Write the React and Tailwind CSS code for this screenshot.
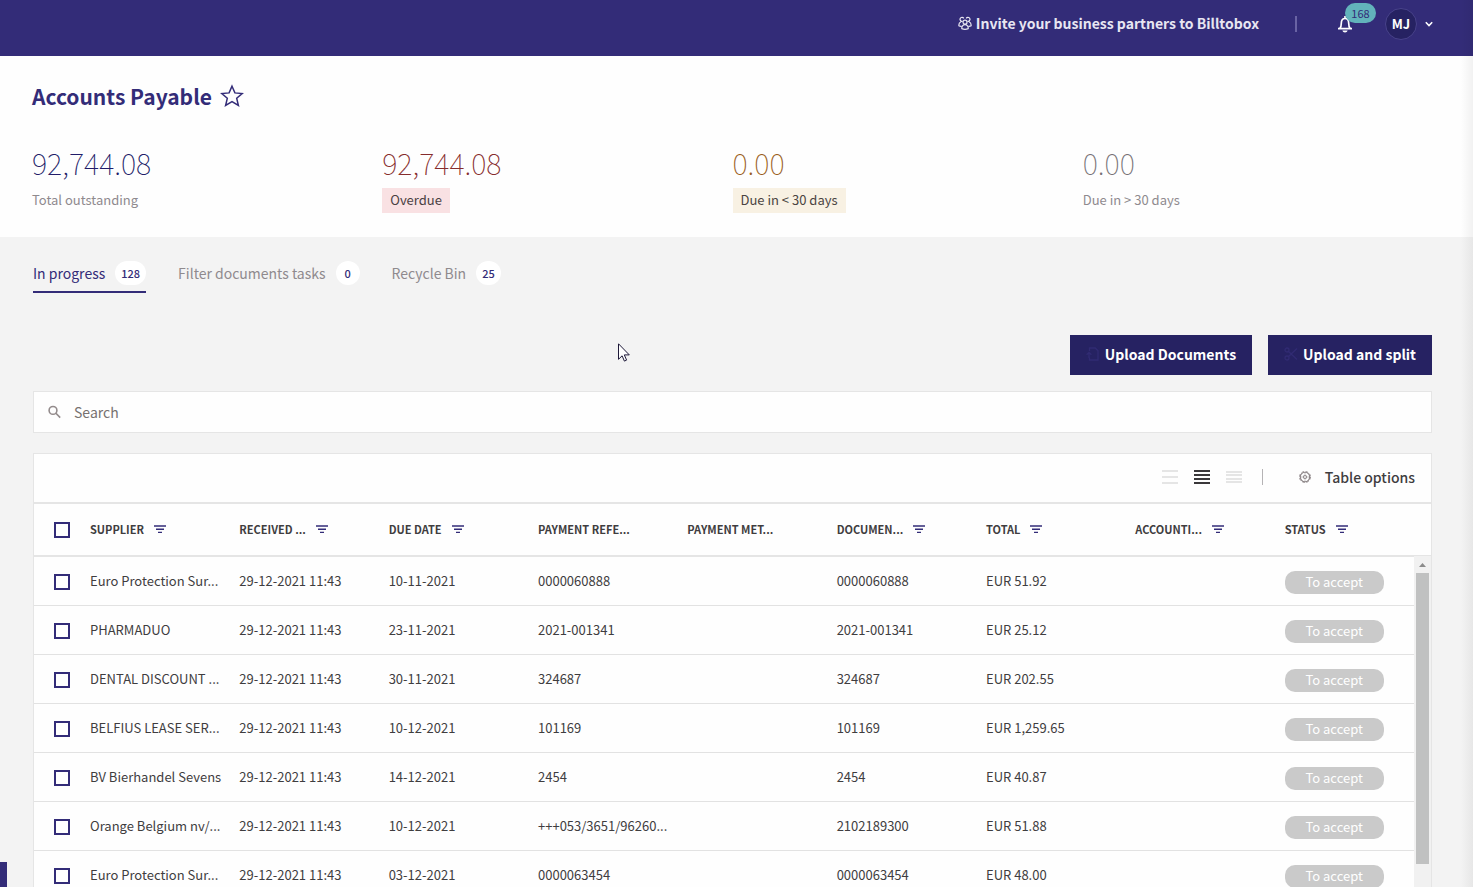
import { useState } from "react";
import clsx from "clsx";

const stats = [
  { value: "92,744.08", label: "Total outstanding", valueClass: "text-[#221c68]", labelClass: "text-[#8f8a8e]" },
  { value: "92,744.08", label: "Overdue", valueClass: "text-[#862c2c]", labelClass: "bg-[#f9e1e3] px-2 text-[#4a3f42]" },
  { value: "0.00", label: "Due in < 30 days", valueClass: "text-[#995d20]", labelClass: "bg-[#f8f1e3] px-2 text-[#4a4441]" },
  { value: "0.00", label: "Due in > 30 days", valueClass: "text-[#767175]", labelClass: "text-[#8f8a8e]" },
];

const tabs = [
  { id: "progress", label: "In progress", count: 128 },
  { id: "filter", label: "Filter documents tasks", count: 0 },
  { id: "bin", label: "Recycle Bin", count: 25 },
];

const columns = [
  { label: "SUPPLIER", filter: true },
  { label: "RECEIVED ...", filter: true },
  { label: "DUE DATE", filter: true },
  { label: "PAYMENT REFE...", filter: false },
  { label: "PAYMENT MET...", filter: false },
  { label: "DOCUMEN...", filter: true },
  { label: "TOTAL", filter: true },
  { label: "ACCOUNTI...", filter: true },
  { label: "STATUS", filter: true },
];

const rows = [
  { supplier: "Euro Protection Sur...", due: "10-11-2021", reference: "0000060888", document: "0000060888", total: "EUR 51.92" },
  { supplier: "PHARMADUO", due: "23-11-2021", reference: "2021-001341", document: "2021-001341", total: "EUR 25.12" },
  { supplier: "DENTAL DISCOUNT ...", due: "30-11-2021", reference: "324687", document: "324687", total: "EUR 202.55" },
  { supplier: "BELFIUS LEASE SER...", due: "10-12-2021", reference: "101169", document: "101169", total: "EUR 1,259.65" },
  { supplier: "BV Bierhandel Sevens", due: "14-12-2021", reference: "2454", document: "2454", total: "EUR 40.87" },
  { supplier: "Orange Belgium nv/...", due: "10-12-2021", reference: "+++053/3651/96260...", document: "2102189300", total: "EUR 51.88" },
  { supplier: "Euro Protection Sur...", due: "03-12-2021", reference: "0000063454", document: "0000063454", total: "EUR 48.00" },
];

export default function App() {
  const [tab, setTab] = useState("progress");

  return (
    <div className="relative flex h-screen flex-col overflow-hidden bg-[#f3f3f3] font-['Noto_Sans_CJK_SC',sans-serif] text-[#3f3d3f]">
      <TopBar />

      {/* Title and totals */}
      <section className="shrink-0 bg-[#fefefe] pt-6 pr-10 pb-6 pl-8">
        <div className="flex h-8 items-center gap-2">
          <h1 className="text-[21px] leading-8 font-bold text-[#332c78]">Accounts Payable</h1>
          <button type="button" aria-label="Add to favourites" className="text-[#332c78]">
            <StarIcon />
          </button>
        </div>
        <div className="mt-[30px] grid grid-cols-4">
          {stats.map((s) => (
            <div key={s.label}>
              <p className={clsx("text-[29px] leading-10 font-thin", s.valueClass)}>{s.value}</p>
              <p className={clsx("mt-[6px] inline-block pb-px text-[13px] leading-6", s.labelClass)}>{s.label}</p>
            </div>
          ))}
        </div>
      </section>

      <main className="flex min-h-0 flex-1 flex-col pt-6 pr-[41px] pl-[33px]">
        <nav className="flex shrink-0 gap-8">
          {tabs.map((t) => (
            <button
              key={t.id}
              type="button"
              onClick={() => setTab(t.id)}
              className={clsx(
                "flex h-8 items-start gap-[10px] border-b-2 text-sm leading-6",
                tab === t.id ? "border-[#332c78] text-[#332c78]" : "border-transparent text-[#8f8a8e]"
              )}
            >
              {t.label}
              <span className="min-w-6 rounded-full bg-white px-[6px] text-center text-[11px] leading-6 font-medium text-[#332c78]">
                {t.count}
              </span>
            </button>
          ))}
        </nav>

        <div className="mt-[42px] flex shrink-0 justify-end gap-4">
          <button type="button" className="flex h-10 items-center gap-[5px] bg-[#262262] px-4 pb-[2px] text-sm font-bold text-white">
            <UploadIcon />
            Upload Documents
          </button>
          <button type="button" className="flex h-10 items-center gap-[5px] bg-[#262262] px-4 pb-[2px] text-sm font-bold text-white">
            <ScissorsIcon />
            Upload and split
          </button>
        </div>

        <label className="mt-4 flex h-[42px] shrink-0 items-center gap-3 border border-[#e5e5e5] bg-[#fefefe] px-[14px]">
          <SearchIcon />
          <input
            type="text"
            aria-label="Search"
            placeholder="Search"
            className="min-w-0 flex-1 bg-transparent text-sm outline-none placeholder:text-[#76716f]"
          />
        </label>

        <section className="mt-5 flex min-h-0 flex-1 flex-col overflow-hidden border border-b-0 border-[#e5e5e5] bg-[#fefefe]">
          <Toolbar />
          <DocumentTable />
        </section>
      </main>

      <div className="absolute bottom-0 left-0 h-[25px] w-[7px] bg-[#332c78]" />
      <div className="absolute inset-y-0 right-0 w-3 bg-linear-to-r from-transparent to-black/5" />
      <PointerIcon />
    </div>
  );
}

function TopBar() {
  return (
    <header className="flex h-14 shrink-0 justify-end bg-[#332c78] pr-10">
      <div className="flex h-12 items-center">
        <a href="#invite" className="flex items-center gap-1 pb-[2px] text-sm font-bold text-[#e8e6f2]">
          <PeopleIcon />
          Invite your business partners to Billtobox
        </a>
        <span className="ml-9 h-4 w-[2px] bg-[#6963a4]" />
        <button type="button" aria-label="Notifications" className="relative ml-10 text-white">
          <BellIcon />
          <span className="absolute -top-3 left-2 w-[31px] rounded-full bg-[#62b3bb] text-center text-[11px] leading-5 text-[#332c78]">
            168
          </span>
        </button>
        <button type="button" aria-label="Account menu" className="ml-8 flex items-center gap-2 text-white">
          <span className="flex size-8 items-center justify-center rounded-full border border-[#48428b] bg-[#262262] text-[13px] font-bold">
            MJ
          </span>
          <svg viewBox="0 0 8 8" className="size-2" fill="none" stroke="currentColor" strokeWidth="1.6">
            <path d="M.8 2.3 4 5.5l3.200-3.200" />
          </svg>
        </button>
      </div>
    </header>
  );
}

function Toolbar() {
  return (
    <div className="flex h-[50px] shrink-0 items-center justify-end border-b-2 border-[#e5e5e5] pr-4 pb-[2px]">
      <div className="flex gap-4">
        <button type="button" aria-label="Comfortable rows" className="text-[#e5e5e5]">
          <svg viewBox="0 0 16 16" className="size-4" fill="currentColor">
            <path d="M0 1h16v2H0zM0 7h16v2H0zM0 13h16v2H0z" />
          </svg>
        </button>
        <button type="button" aria-label="Normal rows" className="text-[#3a383a]">
          <svg viewBox="0 0 16 16" className="size-4" fill="currentColor">
            <path d="M0 1h16v2H0zM0 5h16v2H0zM0 9h16v2H0zM0 13h16v2H0z" />
          </svg>
        </button>
        <button type="button" aria-label="Compact rows" className="text-[#e5e5e5]">
          <svg viewBox="0 0 16 16" className="size-4" fill="currentColor">
            <path d="M0 2h16v2H0zM0 5h16v2H0zM0 9h16v2H0zM0 12h16v2H0z" />
          </svg>
        </button>
      </div>
      <span className="ml-5 h-4 w-px bg-[#b5b3b5]" />
      <button type="button" className="ml-9 flex items-center gap-[14px] text-sm font-medium text-[#3f3d3f]">
        <GearIcon />
        Table options
      </button>
    </div>
  );
}

function DocumentTable() {
  return (
    <div className="relative min-h-0 flex-1">
      <table className="w-full table-fixed border-collapse text-left">
        <thead>
          <tr className="h-[52px] border-b-2 border-[#e5e5e5]">
            <th className="w-[53px] pl-5">
              <Checkbox label="Select all documents" />
            </th>
            {columns.map((c) => (
              <th key={c.label} className="px-[3px] text-[11px] font-bold whitespace-nowrap">
                <div className="flex items-center gap-[10px]">
                  {c.label}
                  {c.filter && (
                    <button type="button" aria-label={`Filter ${c.label}`} className="text-[#332c78]">
                      <FilterIcon />
                    </button>
                  )}
                </div>
              </th>
            ))}
          </tr>
        </thead>
        <tbody className="text-[13px]">
          {rows.map((r, i) => (
            <tr key={i} className="h-[49px] border-b border-[#e2e2e2] whitespace-nowrap">
              <td className="pt-[2px] pl-5">
                <Checkbox label={`Select ${r.supplier}`} />
              </td>
              <td className="px-[3px]">{r.supplier}</td>
              <td className="px-[3px]">29-12-2021 11:43</td>
              <td className="px-[3px]">{r.due}</td>
              <td className="px-[3px]">{r.reference}</td>
              <td />
              <td className="px-[3px]">{r.document}</td>
              <td className="px-[3px]">{r.total}</td>
              <td />
              <td className="px-[3px] pt-[3px]">
                <span className="block h-[23px] w-[99px] rounded-[10px] bg-[#cacaca] text-center leading-[22px] text-white">
                  To accept
                </span>
              </td>
            </tr>
          ))}
        </tbody>
      </table>

      {/* Scrollbar */}
      <div className="absolute top-[52px] right-0 bottom-0 w-[17px] bg-[#f1f1f1] px-[2px]">
        <svg viewBox="0 0 13 17" className="h-[17px] w-[13px]" fill="#8b8b8b">
          <path d="M3 11h7L6.500 7z" />
        </svg>
        <div className="h-[291px] bg-[#c0c1c1]" />
      </div>
    </div>
  );
}

function Checkbox({ label }) {
  return (
    <input
      type="checkbox"
      aria-label={label}
      className="block size-4 appearance-none border-2 border-[#332c78] bg-white checked:bg-[#332c78]"
    />
  );
}

function FilterIcon() {
  return (
    <svg viewBox="0 0 12 10" className="h-[10px] w-3" fill="currentColor">
      <path d="M0 .3h12v1.400H0zM2 3.600h8v1.300H2zM4 6.800h4v1.300H4z" />
    </svg>
  );
}

function StarIcon() {
  return (
    <svg viewBox="0 0 24 24" className="size-6" fill="none" stroke="currentColor" strokeWidth="1.5" strokeLinejoin="miter">
      <path d="m12 2.200 2.900 6.700 7.300.6-5.500 4.800 1.700 7.200L12 17.700l-6.400 3.800 1.700-7.200-5.500-4.800 7.300-.6z" />
    </svg>
  );
}

function PeopleIcon() {
  return (
    <svg viewBox="0 0 14 14" className="size-[14px]" fill="none" stroke="currentColor" strokeWidth="1.200">
      <circle cx="7" cy="6.200" r="2" />
      <path d="M3.800 12.600c-.3-2.200 1.200-4 3.200-4s3.500 1.800 3.200 4c-1.800.8-4.600.8-6.400 0z" />
      <path d="M4.600 5.300A2 2 0 1 1 5.800 2.400M9.400 5.300a2 2 0 1 0-1.200-2.900M3 5.700C1.500 6.300.7 7.800.9 9.800c.8.500 1.800.6 2.800.5M11 5.700c1.500.6 2.300 2.100 2.100 4.100-.8.500-1.800.6-2.800.5" />
    </svg>
  );
}

function BellIcon() {
  return (
    <svg viewBox="0 0 16 18" className="h-[18px] w-4" fill="none" stroke="currentColor" strokeWidth="1.700">
      <path d="M1 13.600h14M2.800 13.500c1.200-1.100 1.500-2.200 1.500-5.200 0-2.800 1.400-4.800 3.700-4.800s3.700 2 3.700 4.800c0 3 .3 4.100 1.500 5.200M8 3.400V1" />
      <path d="M5.400 15.500h5.200c-.3 1.300-1.200 2-2.600 2s-2.300-.7-2.600-2z" fill="currentColor" stroke="none" />
    </svg>
  );
}

function UploadIcon() {
  return (
    <svg viewBox="0 0 14 14" className="size-[14px] text-[#312b73]" fill="none" stroke="currentColor" strokeWidth="1.300">
      <path d="M3.500 4V1h5.700L12 3.800V13H3.500v-2.500M3 11V5.500M.6 7.800 3 5.400l2.400 2.400" />
    </svg>
  );
}

function ScissorsIcon() {
  return (
    <svg viewBox="0 0 14 14" className="size-[14px] text-[#312b73]" fill="none" stroke="currentColor" strokeWidth="1.300">
      <circle cx="3" cy="3" r="2" />
      <circle cx="3" cy="11" r="2" />
      <path d="M4.500 4.500 13 12.500M4.500 9.500 13 1.500" />
    </svg>
  );
}

function SearchIcon() {
  return (
    <svg viewBox="0 0 14 14" className="size-[14px] text-[#938b8c]" fill="none" stroke="currentColor" strokeWidth="1.600">
      <circle cx="5" cy="5.400" r="3.900" />
      <path d="m7.900 8.300 4.300 4.300" />
    </svg>
  );
}

function GearIcon() {
  return (
    <svg viewBox="0 0 12 12" className="size-3 text-[#8c8587]" fill="none" stroke="currentColor" strokeWidth="1.100">
      <circle cx="6" cy="6" r="4.700" />
      <circle cx="6" cy="6" r="5.500" strokeDasharray="2.700 1.620" strokeWidth=".9" />
      <circle cx="6" cy="6" r="1.500" />
      <path d="M6 1.500v2.500M6 8v2.500M1.500 6H4M8 6h2.500" strokeWidth=".5" />
    </svg>
  );
}

function PointerIcon() {
  return (
    <svg viewBox="0 0 12 19" className="absolute top-[343px] left-[618px] h-[19px] w-3" fill="#fff" stroke="#1d1838" strokeWidth="1">
      <path d="M.5.8v15.500l3.600-3.500 2.300 5.300 2.200-1-2.300-5.200h5z" />
    </svg>
  );
}
